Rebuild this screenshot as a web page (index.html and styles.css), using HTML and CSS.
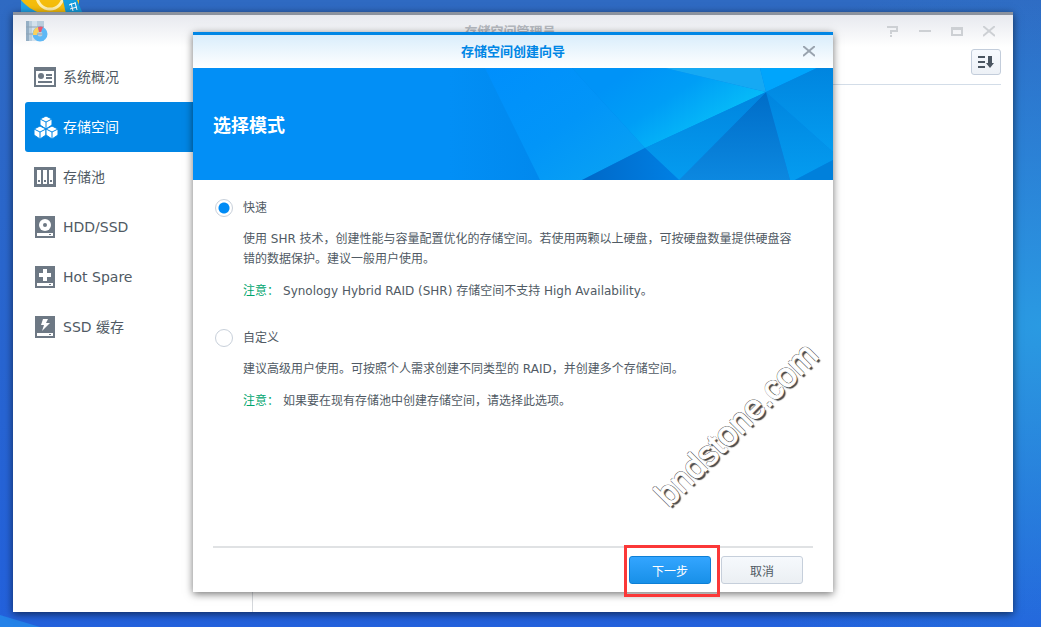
FILE: index.html
```
<!DOCTYPE html>
<html lang="zh-CN">

<head>
  <meta charset="utf-8">
  <title>存储空间管理员</title>
  <link rel="stylesheet" href="styles.css">
</head>

<body>
  <div class="desktop">
    <svg class="shortcut" width="62" height="14" viewBox="0 0 62 14" aria-hidden="true">
      <path d="M0 0h58v14H0z" fill="#f5bd0c" />
      <path d="M0 0c5 6 12 11 22 14H0z" fill="#22a3e6" />
      <circle cx="29" cy="-4" r="13" fill="none" stroke="#fff0b0" stroke-width="3" />
      <path d="M42 0h14l6 14H45z" fill="#159dde" />
      <path d="M48 5l6-2M49 9l7-2M50 3l2 8M54 2l2 8" stroke="#fff" />
    </svg>
    <svg class="corner" width="40" height="12" viewBox="0 0 40 12" aria-hidden="true">
      <path d="M0 0l40 12H0z" fill="#2482e8" />
    </svg>

    <div class="window">
      <div class="titlebar">
        <svg width="24" height="24" viewBox="0 0 24 24" aria-hidden="true">
          <path d="M1 1h18v20H1z" fill="#b9cddd" />
          <path d="M1 1h3v20H1z" fill="#94aec4" />
          <path d="M7 1h5v20H7z" fill="#d3e1ec" />
          <path d="M1 7h18M1 14h18" stroke="#8da3b6" />
          <circle cx="15" cy="14" r="5" fill="none" stroke="#5db8f6" stroke-width="5" />
          <path d="M8 15a7 7 0 0 1 5-8l1 5a3 3 0 0 0-2 3z" fill="#fbd05d" />
          <path d="M13 7q3-1 5 0l-2 5h-2z" fill="#ea5870" />
        </svg>
        <span class="window-title">存储空间管理员</span>
        <div class="controls">
          <button type="button" aria-label="帮助">
            <svg width="12" height="12" viewBox="0 0 12 12"><path d="M0 1h10v4H4v3M4 9v2" /></svg>
          </button>
          <button type="button" aria-label="最小化">
            <svg width="12" height="12" viewBox="0 0 12 12"><path d="M0 5h12" /></svg>
          </button>
          <button type="button" aria-label="最大化">
            <svg width="12" height="12" viewBox="0 0 12 12"><path d="M0 2h12M0 3h12M1 2v7h10V2" /></svg>
          </button>
          <button type="button" aria-label="关闭">
            <svg width="12" height="12" viewBox="0 0 12 12"><path class="cross" d="M0 0l12 10M12 0L0 10" /></svg>
          </button>
        </div>
      </div>

      <div class="window-body">
        <nav class="sidebar">
          <a href="#" class="item">
            <svg width="22" height="22" viewBox="0 0 22 22">
              <path d="M0 1h22v20H0z" />
              <path d="M2 5h18v14H2z" fill="#fff" />
              <circle cx="7" cy="10" r="3" />
              <path d="M12 8h6v2h-6zM12 11h6v2h-6zM4 15h14v2H4z" />
            </svg>
            系统概况
          </a>
          <a href="#" class="item active">
            <svg width="24" height="24" viewBox="0 0 24 24">
              <g id="cube" stroke="#0086e5">
                <path d="M12 1l6 3v6l-6 4-6-4V4z" />
                <path d="M6 4l6 3 6-3M12 7v6" fill="none" />
              </g>
              <use href="#cube" x="-6" y="10" />
              <use href="#cube" x="6" y="10" />
            </svg>
            存储空间
          </a>
          <a href="#" class="item">
            <svg width="22" height="22" viewBox="0 0 22 22">
              <path d="M0 1h22v20H0z" />
              <path d="M3 4h4v14H3zM9 4h4v14H9zM15 4h4v14h-4z" fill="#fff" />
              <path d="M4 14h2v2H4zM10 14h2v2h-2zM16 14h2v2h-2z" />
            </svg>
            存储池
          </a>
          <a href="#" class="item">
            <svg width="22" height="22" viewBox="0 0 22 22">
              <path d="M1 0h20v22H1z" />
              <circle cx="11" cy="9" r="6" fill="#fff" />
              <circle cx="11" cy="9" r="2" />
              <path d="M3 17h16v3H3z" fill="#fff" />
              <path d="M15 18h2v1h-2z" />
            </svg>
            HDD/SSD
          </a>
          <a href="#" class="item">
            <svg width="22" height="22" viewBox="0 0 22 22">
              <path d="M1 0h20v22H1z" />
              <path d="M9 3h4v4h4v4h-4v4H9v-4H5V7h4zM3 17h16v3H3z" fill="#fff" />
              <path d="M15 18h2v1h-2z" />
            </svg>
            Hot Spare
          </a>
          <a href="#" class="item">
            <svg width="22" height="22" viewBox="0 0 22 22">
              <path d="M1 0h20v22H1z" />
              <path d="M9 3h5l-2 4h4l-8 8 2-6H7zM3 17h16v3H3z" fill="#fff" />
              <path d="M15 18h2v1h-2z" />
            </svg>
            SSD 缓存
          </a>
        </nav>
        <div class="main">
          <div class="toolbar">
            <button type="button" class="sort-btn" aria-label="排序">
              <svg width="16" height="14" viewBox="0 0 16 14">
                <path d="M0 1h7v2H0zM0 6h7v2H0zM0 11h7v2H0zM10 1h4v7h2l-4 5-4-5h2z" />
              </svg>
            </button>
          </div>
        </div>
      </div>

      <div class="overlay">
        <form class="dialog">
          <div class="dialog-head">
            <span class="dialog-title">存储空间创建向导</span>
            <button type="button" class="close" aria-label="关闭">
              <svg width="12" height="12" viewBox="0 0 12 12"><path class="cross" d="M0 0l12 10M12 0L0 10" /></svg>
            </button>
          </div>

          <div class="banner">
            <svg class="facets" viewBox="0 0 640 112" preserveAspectRatio="xMaxYMid slice" aria-hidden="true">
              <defs>
                <linearGradient id="g1" x1="0" y1="0" x2="1" y2="0">
                  <stop offset="0" stop-color="#028ff6" />
                  <stop offset="0.4" stop-color="#028ff6" />
                  <stop offset="0.6" stop-color="#0086ea" />
                </linearGradient>
                <linearGradient id="g2" x1="0" y1="0" x2="1" y2="1">
                  <stop offset="0" stop-color="#008ffc" />
                  <stop offset="0.5" stop-color="#0295f8" />
                  <stop offset="1" stop-color="#0aa4f2" />
                </linearGradient>
                <linearGradient id="g3" gradientUnits="userSpaceOnUse" x1="440" y1="0" x2="490" y2="75">
                  <stop offset="0" stop-color="#0093f7" />
                  <stop offset="0.5" stop-color="#009ef6" />
                  <stop offset="1" stop-color="#06b9f8" />
                </linearGradient>
                <linearGradient id="g4" x1="0" y1="0" x2="0" y2="1">
                  <stop offset="0" stop-color="#0085df" />
                  <stop offset="1" stop-color="#049cf0" />
                </linearGradient>
                <linearGradient id="g5" x1="0" y1="0" x2="0" y2="1">
                  <stop offset="0" stop-color="#006dc8" />
                  <stop offset="1" stop-color="#0c88e0" />
                </linearGradient>
                <linearGradient id="g6" x1="0" y1="0" x2="1" y2="0">
                  <stop offset="0" stop-color="#0068c8" />
                  <stop offset="1" stop-color="#0080e4" />
                </linearGradient>
              </defs>
              <path d="M0 0h640v112H0z" fill="url(#g1)" />
              <path d="M292 0h87l73 80-63 32h-42z" fill="url(#g2)" />
              <path d="M379 0h93l101 24-121 56z" fill="url(#g3)" />
              <path d="M472 0h95l6 24z" fill="#16a9f3" />
              <path d="M567 0h57l-51 24z" fill="#00a5fc" />
              <path d="M624 0h16v84l-67-60z" fill="url(#g4)" />
              <path d="M573 24l67 60v8l-38 20h-5z" fill="url(#g4)" />
              <path d="M573 24l24 88H486z" fill="url(#g5)" />
              <path d="M452 80l121-56-87 88z" fill="url(#g4)" />
              <path d="M452 80l34 32h-97z" fill="url(#g6)" />
              <path d="M602 112l38-20v20z" fill="#0080db" />
            </svg>
            <h1>选择模式</h1>
          </div>

          <div class="options">
            <div class="option">
              <label class="choice"><input type="radio" name="mode" checked>快速</label>
              <p>使用 SHR 技术，创建性能与容量配置优化的存储空间。若使用两颗以上硬盘，可按硬盘数量提供硬盘容错的数据保护。建议一般用户使用。</p>
              <p><span class="note">注意：</span>Synology Hybrid RAID (SHR) 存储空间不支持 High Availability。</p>
            </div>
            <div class="option">
              <label class="choice"><input type="radio" name="mode">自定义</label>
              <p>建议高级用户使用。可按照个人需求创建不同类型的 RAID，并创建多个存储空间。</p>
              <p><span class="note">注意：</span>如果要在现有存储池中创建存储空间，请选择此选项。</p>
            </div>
          </div>

          <div class="dialog-foot">
            <div class="marked">
              <button type="button" class="btn primary">下一步</button>
            </div>
            <button type="button" class="btn">取消</button>
          </div>

          <span class="watermark">bndstone.com</span>
        </form>
      </div>
    </div>
  </div>
</body>

</html>
```
FILE: styles.css
```
* {
  box-sizing: border-box;
}

body {
  margin: 0;
  font-family: "DejaVu Sans", "Noto Sans CJK SC", sans-serif;
  font-size: 12px;
  line-height: 20px;
  color: #505a64;
}

button {
  font-family: inherit;
  font-size: 12px;
  padding: 0;
  cursor: pointer;
}

svg {
  display: block;
  flex-shrink: 0;
}

.desktop {
  position: relative;
  display: flex;
  min-height: 100vh;
  padding: 12px 28px 15px 13px;
  background:
    radial-gradient(ellipse 50% 55% at 100% 52%, #2a9ae2, rgba(42, 154, 226, 0)),
    linear-gradient(#2f6ac2, #2361dc);
}

.shortcut {
  position: absolute;
  left: 21px;
  top: 0;
}

.corner {
  position: absolute;
  left: 0;
  bottom: 0;
}

/* app window */
.window {
  position: relative;
  flex: 1;
  display: flex;
  flex-direction: column;
  border-top: 3px solid #8b929e;
  background: linear-gradient(#e7e9ef, #fff 32px);
  box-shadow: 0 2px 8px rgba(0, 0, 0, 0.6);
}

.titlebar {
  display: grid;
  grid-template-columns: 1fr auto 1fr;
  align-items: center;
  height: 34px;
  padding: 0 18px 0 12px;
}

.window-title {
  font-size: 13px;
  font-weight: bold;
  color: #b4b8be;
}

.controls {
  display: flex;
  justify-content: flex-end;
  gap: 20px;
}

.controls button,
.close {
  border: none;
  background: none;
}

.controls path,
.close path {
  fill: none;
  stroke: #cdd0d4;
  stroke-width: 2px;
}

.close path {
  stroke: #99a3ae;
}

.window-body {
  flex: 1;
  display: flex;
}

.sidebar {
  width: 240px;
  padding: 3px 0 0 12px;
  border-right: 1px solid #d5d8dc;
}

.item {
  display: flex;
  align-items: center;
  gap: 7px;
  height: 50px;
  padding-left: 9px;
  border-radius: 3px 0 0 3px;
  font-size: 14px;
  color: #505a64;
  fill: #6d7884;
  text-decoration: none;
}

.active {
  gap: 5px;
  background: #0086e5;
  color: #fff;
  fill: #fff;
}

.main {
  flex: 1;
  padding: 0 12px;
}

.toolbar {
  display: flex;
  justify-content: flex-end;
  height: 36px;
  border-bottom: 1px solid #d3dde8;
}

.sort-btn {
  display: flex;
  align-items: center;
  justify-content: center;
  width: 30px;
  height: 26px;
  border: 1px solid #c3cddb;
  border-radius: 3px;
  background: linear-gradient(#f7fafe, #edf1f6);
  fill: #4b5661;
}

/* wizard */
.overlay {
  position: absolute;
  inset: -3px 0 0;
  display: flex;
  align-items: center;
  justify-content: center;
}

.dialog {
  position: relative;
  display: flex;
  flex-direction: column;
  width: 640px;
  min-height: 560px;
  border-top: 3px solid #0086e5;
  background: #fff;
  box-shadow: 0 2px 8px rgba(0, 0, 0, 0.55);
}

.dialog-head {
  display: grid;
  grid-template-columns: 1fr auto 1fr;
  align-items: center;
  height: 33px;
  padding: 0 18px;
  background: linear-gradient(#d9edfb, #fff);
}

.dialog-title {
  grid-column: 2;
  font-size: 13px;
  font-weight: bold;
  color: #0086e5;
}

.close {
  justify-self: end;
}

.banner {
  position: relative;
  display: flex;
  align-items: center;
  height: 112px;
  padding: 4px 20px 0;
}

.facets {
  position: absolute;
  inset: 0;
  width: 100%;
  height: 100%;
}

.banner h1 {
  position: relative;
  margin: 0;
  font-size: 18px;
  color: #fff;
}

.options {
  flex: 1;
  padding: 18px 30px 18px 20px;
}

.option {
  margin-bottom: 27px;
}

.choice {
  display: flex;
  align-items: center;
  gap: 10px;
}

.choice input {
  appearance: none;
  width: 18px;
  height: 18px;
  margin: 0 0 0 2px;
  border: 1px solid #c8d0da;
  border-radius: 50%;
  background: #fff;
}

.choice input:checked {
  background: radial-gradient(circle, #008bf5 5px, #fff 6px);
}

.option p {
  margin: 11px 0 12px 30px;
}

.note {
  margin-right: 4px;
  color: #00a56e;
}

.dialog-foot {
  display: flex;
  justify-content: flex-end;
  gap: 10px;
  margin: 0 20px;
  padding: 8px 10px;
  border-top: 2px solid #e0e2e4;
}

.btn {
  width: 82px;
  height: 28px;
  border: 1px solid #c6cfdb;
  border-radius: 3px;
  background: linear-gradient(#f6f9fd, #ebeff3);
  color: #505a64;
}

.primary {
  border-color: #0d7fd6;
  background: linear-gradient(#33a5ff, #1890e8);
  color: #fff;
}

/* red frame round the next step */
.marked {
  position: relative;
}

.marked::after {
  content: "";
  position: absolute;
  inset: -11px -9px -13px -5px;
  border: 3px solid #fb3838;
  pointer-events: none;
}

.watermark {
  position: absolute;
  right: -10px;
  bottom: 148px;
  font-family: "Liberation Sans", sans-serif;
  font-size: 34px;
  line-height: 40px;
  color: #fff;
  -webkit-text-stroke: 1px #fff;
  text-shadow: -1px 0 #555, 0 -1px #555, 1px 0 #555, 0 1px #555, 0 3px 1px #444;
  transform: rotate(-45deg);
  pointer-events: none;
}
```
